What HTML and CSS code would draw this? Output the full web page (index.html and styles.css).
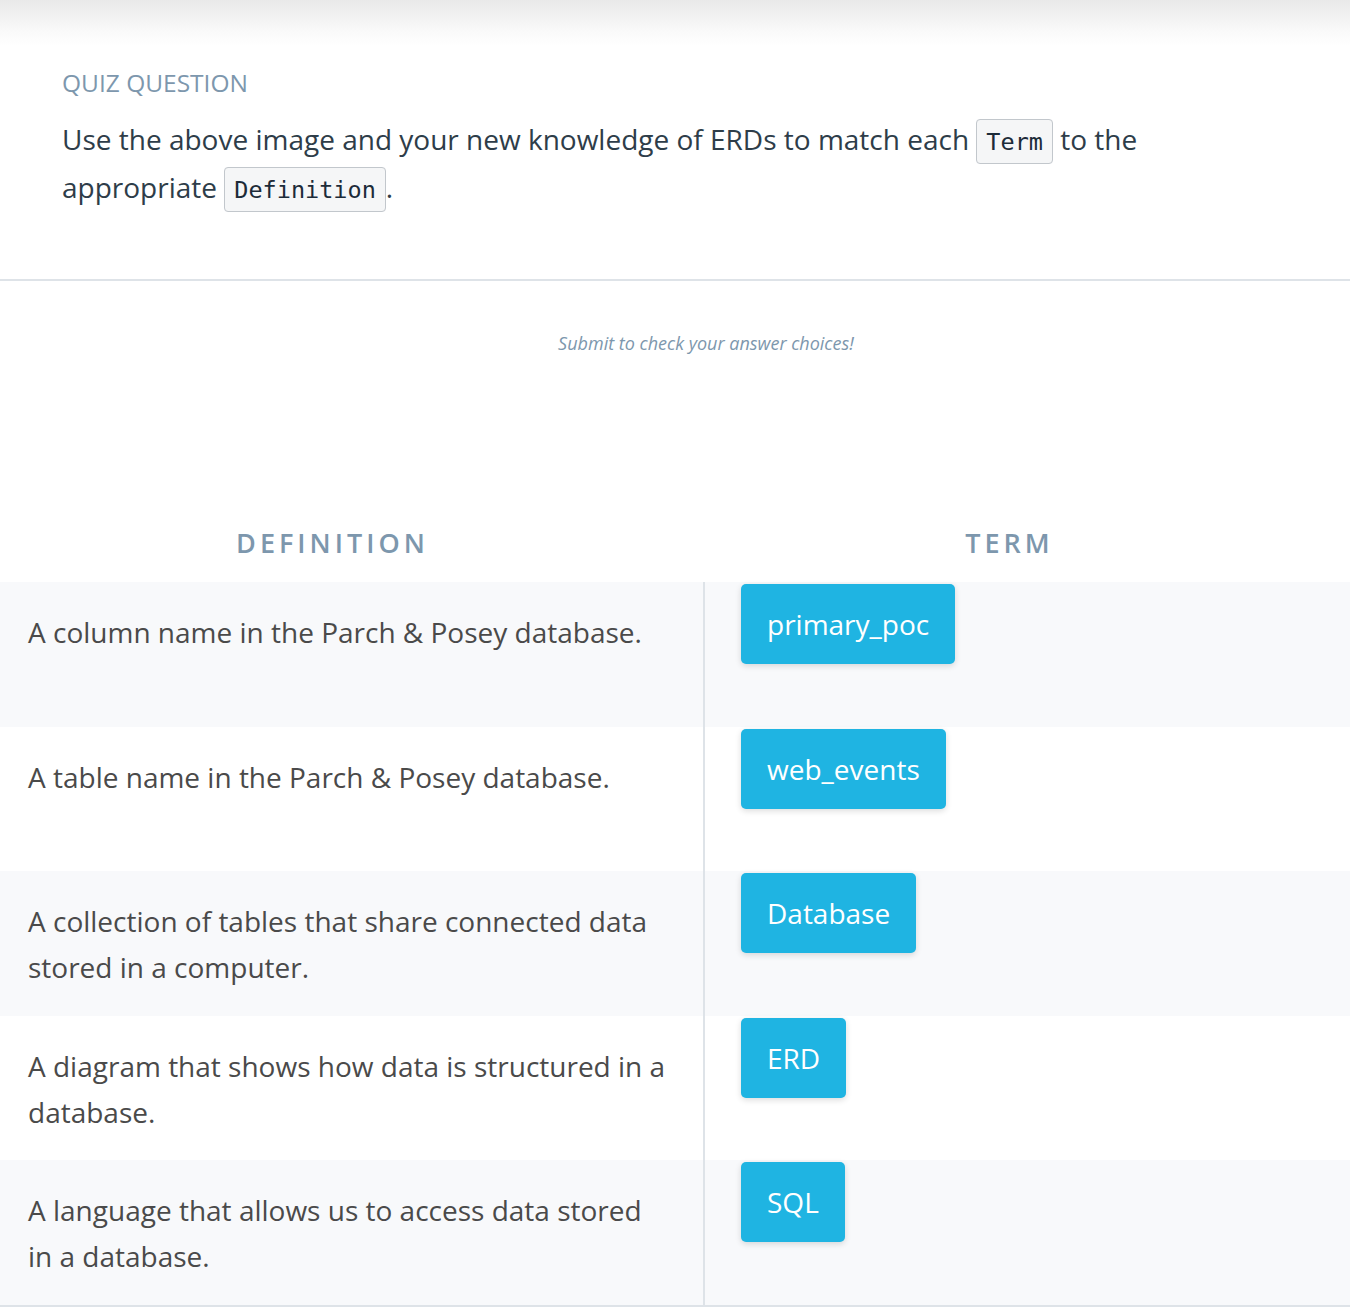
FILE: index.html
```html
<!DOCTYPE html>
<html lang="en">
<head>
<meta charset="utf-8">
<title>Quiz Question</title>
<link rel="stylesheet" href="styles.css">
</head>
<body>
<div class="shade"></div>
<section class="question">
  <h2 class="label">QUIZ QUESTION</h2>
  <p class="prompt">Use the above image and your new knowledge of ERDs to match each <code>Term</code> to the appropriate <code>Definition</code>.</p>
</section>
<hr class="rule">
<p class="hint">Submit to check your answer choices!</p>
<div class="match">
  <div class="head">
    <div class="head-def">DEFINITION</div>
    <div class="head-term">TERM</div>
  </div>
  <div class="row alt">
    <div class="def">A column name in the Parch &amp; Posey database.</div>
    <div class="term"><span class="chip">primary_poc</span></div>
  </div>
  <div class="row">
    <div class="def">A table name in the Parch &amp; Posey database.</div>
    <div class="term"><span class="chip">web_events</span></div>
  </div>
  <div class="row alt">
    <div class="def">A collection of tables that share connected data stored in a computer.</div>
    <div class="term"><span class="chip">Database</span></div>
  </div>
  <div class="row">
    <div class="def">A diagram that shows how data is structured in a database.</div>
    <div class="term"><span class="chip">ERD</span></div>
  </div>
  <div class="row alt last">
    <div class="def">A language that allows us to access data stored in a database.</div>
    <div class="term"><span class="chip">SQL</span></div>
  </div>
</div>
</body>
</html>
```
FILE: styles.css
```css
html, body {
  margin: 0;
  padding: 0;
  background: #ffffff;
}
body {
  font-family: "Open Sans", "Noto Sans", sans-serif;
  width: 1350px;
}
.shade {
  height: 46px;
  background: linear-gradient(#e9e9e9, #fafafa 70%, #ffffff);
}
.question {
  padding: 0 62px;
}
.label {
  margin: 0;
  padding-top: 22px;
  font-size: 24.5px;
  line-height: 30px;
  font-weight: 400;
  color: #7d97ad;
}
.prompt {
  margin: 0;
  padding-top: 17px;
  font-size: 28px;
  line-height: 48px;
  color: #2e3d49;
  width: 1120px;
}
.prompt code {
  font-family: "DejaVu Sans Mono", monospace;
  font-size: 23.5px;
  line-height: 1;
  background: #f5f6f7;
  border: 1px solid #c2c7cc;
  border-radius: 4px;
  padding: 8px 9px 7px;
  color: #1c2b39;
}
.rule {
  margin: 68px 0 0;
  border: 0;
  height: 2px;
  background: #dee3e8;
}
.hint {
  margin: 49px 0 0;
  text-align: center;
  font-style: italic;
  font-size: 18px;
  line-height: 26px;
  color: #7d97ad;
  padding-left: 62px;
}
.match {
  margin-top: 164px;
}
.head {
  display: grid;
  grid-template-columns: 705px 1fr;
  height: 62px;
  align-items: start;
  font-size: 27px;
  line-height: 46px;
  letter-spacing: 4px;
  color: #7d97ad;
  font-weight: 600;
}
.head-def {
  text-align: center;
  padding-right: 40px;
}
.head-term {
  text-align: center;
  padding-right: 36px;
}
.row {
  display: grid;
  grid-template-columns: 705px 1fr;
  height: 144.6px;
  background: #ffffff;
}
.row.alt {
  background: #f8f9fb;
}
.row.last {
  border-bottom: 2px solid #dee3e8;
}
.def {
  box-sizing: border-box;
  border-right: 2px solid #dee3e8;
  padding: 27px 36px 0 28px;
  font-size: 28px;
  line-height: 46px;
  color: #4a4a4a;
}
.term {
  padding: 2px 0 0 36px;
}
.chip {
  display: inline-block;
  height: 80px;
  line-height: 80px;
  padding: 0 26px;
  font-size: 28px;
  color: #ffffff;
  background: #1fb4e2;
  border-radius: 5px;
  box-shadow: 0 2px 6px rgba(0, 0, 0, 0.14);
}
```
